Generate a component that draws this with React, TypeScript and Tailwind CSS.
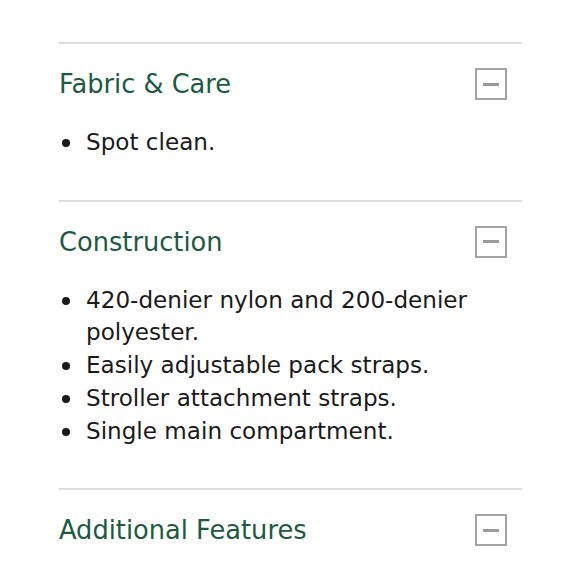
import React from 'react';

const SECTIONS = [
  { title: 'Fabric & Care', items: ['Spot clean.'] },
  {
    title: 'Construction',
    items: [
      '420-denier nylon and 200-denier polyester.',
      'Easily adjustable pack straps.',
      'Stroller attachment straps.',
      'Single main compartment.',
    ],
  },
  { title: 'Additional Features', items: [] as string[] },
];

function MinusBox() {
  return (
    <span className="flex h-[32px] w-[32px] shrink-0 items-center justify-center border-2 border-[#a3a3a3] bg-white">
      <span className="block h-[3px] w-[16px] bg-[#9a9a9a]" />
    </span>
  );
}

export default function App() {
  return (
    <div className="min-h-[580px] w-[580px] bg-white pt-[42px]" style={{ fontFamily: '"DejaVu Sans", sans-serif' }}>
      <div className="mx-[59px] w-[463px]">
        {SECTIONS.map((s) => (
          <section key={s.title} className="border-t-2 border-[#dcdcdc] pt-[24px] pb-[41px]">
            <div className="flex items-center justify-between pr-[15px]">
              <h3 className="text-[25.7px] leading-[32px] text-[#1c5a42]">{s.title}</h3>
              <MinusBox />
            </div>
            {s.items.length > 0 && (
              <ul className="mt-[26px] pr-[20px]">
                {s.items.map((it) => (
                  <li key={it} className="flex text-[23.1px] leading-[32.7px] text-[#1a1a1a]">
                    <span className="flex w-[27px] shrink-0 items-center pl-[3px]">
                      <span className="mt-[1px] block h-[8px] w-[8px] self-start translate-y-[12px] rounded-full bg-[#1a1a1a]" />
                    </span>
                    <span>{it}</span>
                  </li>
                ))}
              </ul>
            )}
          </section>
        ))}
      </div>
    </div>
  );
}
